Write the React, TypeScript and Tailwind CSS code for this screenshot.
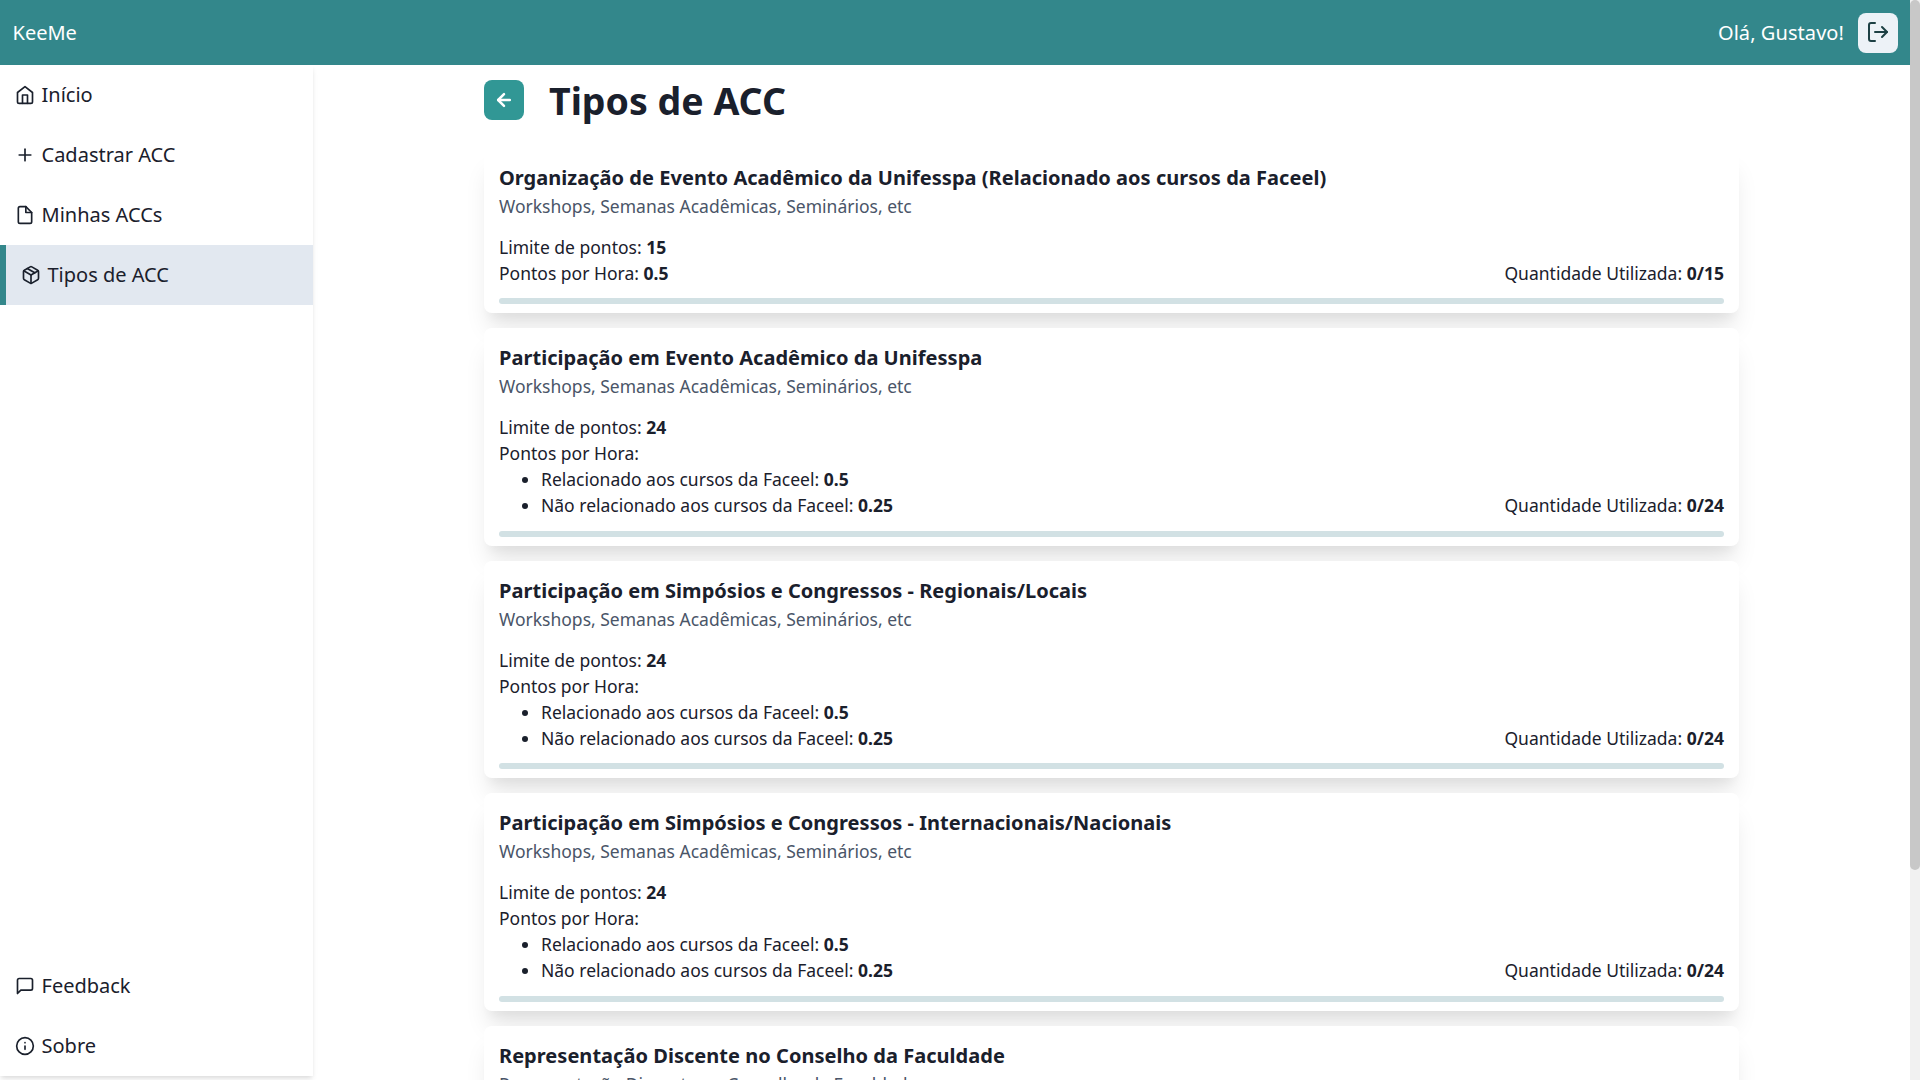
import React from "react";
import { FiHome, FiPlus, FiFile, FiPackage, FiInfo, FiMessageSquare, FiLogOut, FiArrowLeft } from "react-icons/fi";

type Rate = { label: string; value: string };
type AccType = { name: string; description: string; limit: number; perHour?: string; rates?: Rate[] };

const rates: Rate[] = [
  { label: "Relacionado aos cursos da Faceel", value: "0.5" },
  { label: "Não relacionado aos cursos da Faceel", value: "0.25" },
];
const workshops = "Workshops, Semanas Acadêmicas, Seminários, etc";

const types: AccType[] = [
  { name: "Organização de Evento Acadêmico da Unifesspa (Relacionado aos cursos da Faceel)", description: workshops, limit: 15, perHour: "0.5" },
  { name: "Participação em Evento Acadêmico da Unifesspa", description: workshops, limit: 24, rates },
  { name: "Participação em Simpósios e Congressos - Regionais/Locais", description: workshops, limit: 24, rates },
  { name: "Participação em Simpósios e Congressos - Internacionais/Nacionais", description: workshops, limit: 24, rates },
  { name: "Representação Discente no Conselho da Faculdade", description: "Representação Discente no Conselho da Faculdade", limit: 15, perHour: "0.5" },
];

function NavItem({ icon, label, active }: { icon: React.ReactNode; label: string; active?: boolean }) {
  return (
    <a className={`flex h-[60px] shrink-0 items-center gap-[6.5px] pl-[15px] text-xl ${active ? "border-l-[6px] border-[#33878b] bg-[#e2e8f0]" : ""}`}>
      {icon}
      <span>{label}</span>
    </a>
  );
}

function Card({ item }: { item: AccType }) {
  return (
    <section className={`flex shrink-0 flex-col rounded-lg bg-white px-[15px] pt-[15px] pb-[9px] shadow-[0_20px_25px_-5px_rgba(0,0,0,0.1),0_10px_10px_-5px_rgba(0,0,0,0.04)] ${item.rates ? "h-[217.5px]" : "h-[165px]"}`}>
      <h2 className="text-xl leading-[30px] font-bold tracking-[0.03px]">{item.name}</h2>
      <p className="text-[17.5px] leading-[26.25px] text-[#4a5568]">{item.description}</p>
      <div className="mt-[14.75px] flex items-end justify-between text-[17.5px] leading-[26px]">
        <div>
          <p>Limite de pontos: <b>{item.limit}</b></p>
          <p>Pontos por Hora: {item.perHour && <b>{item.perHour}</b>}</p>
          {item.rates && (
            <ul className="ml-[42px] list-disc">
              {item.rates.map((r) => (
                <li key={r.label}>{r.label}: <b>{r.value}</b></li>
              ))}
            </ul>
          )}
        </div>
        <p>Quantidade Utilizada: <b>0/{item.limit}</b></p>
      </div>
      <div className="mt-auto h-[6px] rounded-[3px] bg-[#d2e1e4]" />
    </section>
  );
}

export default function App() {
  return (
    <div className="flex h-[1080px] w-[1920px] overflow-hidden bg-white font-['Noto_Sans',sans-serif] text-[#1a202c]">
      <div className="flex w-[1910px] flex-col">
        <header className="flex h-[65px] shrink-0 items-center justify-between bg-[#33878b] pr-3 pl-[12.5px] text-xl text-white">
          <span>KeeMe</span>
          <div className="flex items-center gap-[14px]">
            <span className="tracking-[0.07px]">Olá, Gustavo!</span>
            <button className="flex size-10 items-center justify-center rounded-lg bg-[#edf2f7] text-[#1d4044]">
              <FiLogOut size={24} className="-mt-px" />
            </button>
          </div>
        </header>
        <div className="flex min-h-0 flex-1">
          <nav className="flex h-[1011px] w-[313px] shrink-0 flex-col bg-white shadow-[0_4px_6px_-1px_rgba(0,0,0,0.1),0_2px_4px_-1px_rgba(0,0,0,0.06)]">
            <NavItem icon={<FiHome size={20} />} label="Início" />
            <NavItem icon={<FiPlus size={20} />} label="Cadastrar ACC" />
            <NavItem icon={<FiFile size={20} />} label="Minhas ACCs" />
            <NavItem icon={<FiPackage size={20} />} label="Tipos de ACC" active />
            <div className="flex-1" />
            <NavItem icon={<FiMessageSquare size={20} />} label="Feedback" />
            <NavItem icon={<FiInfo size={20} />} label="Sobre" />
          </nav>
          <main className="flex flex-1 flex-col items-center">
            <div className="flex w-[1255px] flex-col pt-[15px]">
              <div className="mb-[15px] flex h-[53px] items-start gap-[25px]">
                <button className="flex size-10 items-center justify-center rounded-lg bg-[#319795] text-white">
                  <FiArrowLeft size={20} strokeWidth={3} />
                </button>
                <h1 className="text-[37.5px] leading-[41px] font-bold">Tipos de ACC</h1>
              </div>
              <div className="flex flex-col gap-[15px]">
                {types.map((t) => <Card key={t.name} item={t} />)}
              </div>
            </div>
          </main>
        </div>
      </div>
      <div className="h-full w-[10px] bg-[#f1f1f1]">
        <div className="h-[870px] rounded-[5px] bg-[#c8c8c8]" />
      </div>
    </div>
  );
}
